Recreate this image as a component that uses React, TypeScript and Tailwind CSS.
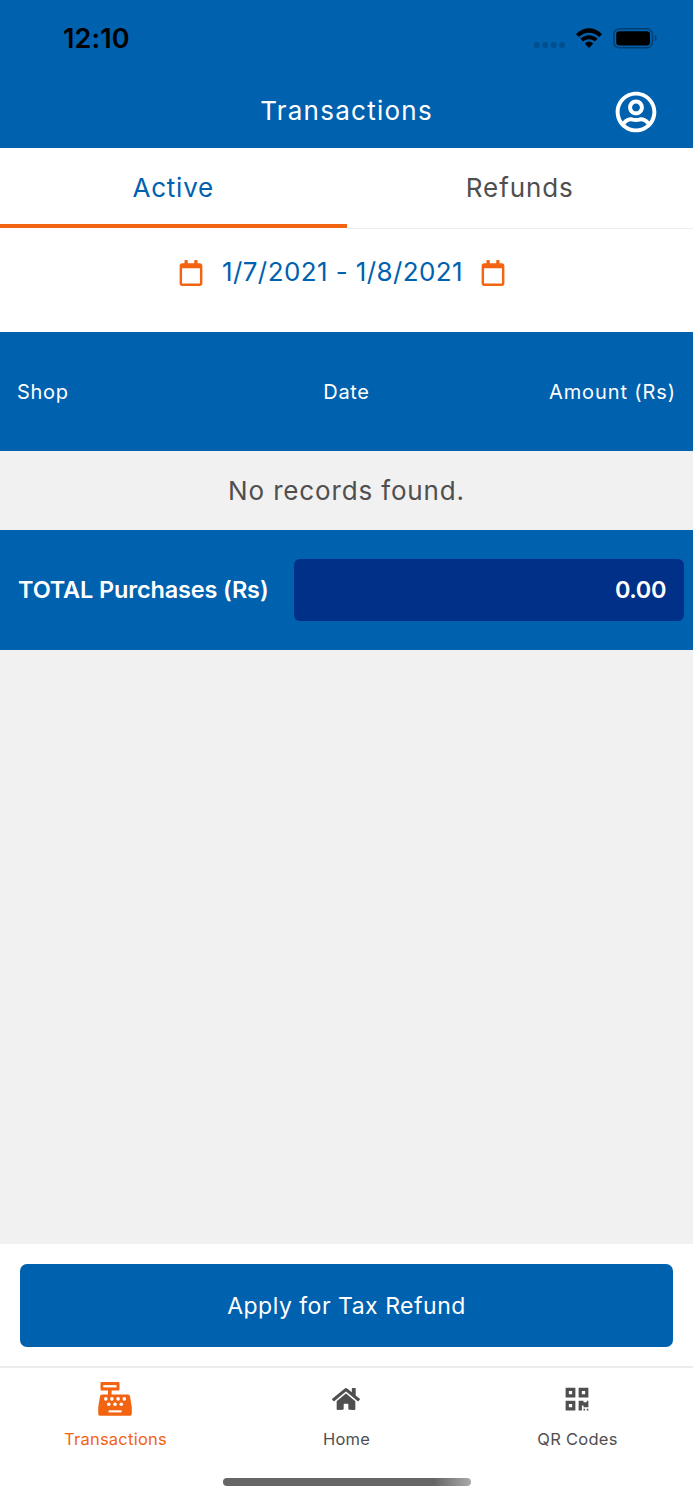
import { FaHome, FaQrcode, FaRegCalendar, FaRegUserCircle } from "react-icons/fa";

function StatusBar() {
  return (
    <div className="flex h-[76px] items-center justify-between pl-[63px] pr-[35px]">
      <span className="text-[27px] font-semibold leading-none tracking-[0.1px] text-black">
        12:10
      </span>
      <div className="flex items-center">
        <svg width="32" height="6" viewBox="0 0 32 6" className="mt-[14px]" fill="#004f8f">
          <rect x="0" y="0" width="5.6" height="6" rx="2" />
          <rect x="8.4" y="0" width="5.6" height="6" rx="2" />
          <rect x="16.9" y="0" width="5.6" height="6" rx="2" />
          <rect x="25.3" y="0" width="5.6" height="6" rx="2" />
        </svg>
        <svg width="28" height="21" viewBox="0 0 28 21" className="ml-[9px]" fill="#000">
          <path d="M1 6.200C8.500-1.700 19.500-1.700 27 6.200L24.200 9C18.300 3.200 9.700 3.200 3.800 9Z" />
          <path d="M5.400 10.800C10.300 5.900 17.700 5.900 22.600 10.800L19.800 13.500C16.500 10.400 11.500 10.400 8.200 13.500Z" />
          <path d="M9.700 15.400C12.200 13.300 15.800 13.300 18.300 15.400L14 20Z" />
        </svg>
        <svg width="45" height="21" viewBox="0 0 45 21" className="ml-[10px]">
          <rect x="0.8" y="0.8" width="38.6" height="19" rx="5.5" fill="none" stroke="#003e70" strokeWidth="1.5" />
          <rect x="3.2" y="3.2" width="33.8" height="14.2" rx="3.2" fill="#000" />
          <path d="M41.800 7v6.600c2.400-1.200 2.400-5.400 0-6.600z" fill="#003e70" />
        </svg>
      </div>
    </div>
  );
}

function CashRegisterIcon() {
  return (
    <svg width="34" height="34" viewBox="0 0 34 34">
      <path
        fill="#f26411"
        d="M3.500 0h17a1 1 0 0 1 1 1v6.500a1 1 0 0 1-1 1h-6.900v4H30a2 2 0 0 1 2 1.700l1.800 11V32a1.800 1.800 0 0 1-1.800 1.800H2A1.800 1.800 0 0 1 .2 32v-6.800l1.800-11a2 2 0 0 1 2-1.700h6V8.500H3.500a1 1 0 0 1-1-1V1a1 1 0 0 1 1-1z"
      />
      <g fill="#fff">
        <rect x="5.300" y="3.100" width="13.200" height="2.300" />
        <rect x="10.600" y="28.300" width="13" height="2.100" />
        <circle cx="7.800" cy="16.900" r="1.800" />
        <circle cx="13.900" cy="16.900" r="1.800" />
        <circle cx="20.100" cy="16.900" r="1.800" />
        <circle cx="26.300" cy="16.900" r="1.800" />
        <circle cx="10.800" cy="22.300" r="1.800" />
        <circle cx="17" cy="22.300" r="1.800" />
        <circle cx="23.300" cy="22.300" r="1.800" />
      </g>
    </svg>
  );
}

const TABS = [
  {
    label: "Transactions",
    icon: <CashRegisterIcon />,
    className: "text-[#f26411]",
  },
  {
    label: "Home",
    icon: <FaHome size={28} />,
    className: "text-[#4f4f4f]",
  },
  {
    label: "QR Codes",
    icon: <FaQrcode size={26} />,
    className: "text-[#4f4f4f]",
  },
];

export default function App() {
  return (
    <div className="flex h-[1500px] w-[693px] flex-col bg-[#f1f1f1] font-['Inter',sans-serif]">
      <header className="h-[148px] shrink-0 bg-[#0061af] text-white">
        <StatusBar />
        <div className="grid h-[71px] grid-cols-[1fr_auto_1fr] items-center">
          <h1 className="col-start-2 pb-[2px] text-[26px] tracking-[1.25px]">Transactions</h1>
          <FaRegUserCircle size={42} className="mr-[36px] justify-self-end" />
        </div>
      </header>

      {/* Active / Refunds */}
      <div className="grid h-[81px] shrink-0 grid-cols-2 grid-rows-[81px] bg-white text-center text-[26px] leading-[80px]">
        <div className="flex h-[80px] flex-col border-b-[4px] border-[#f26411] tracking-[0.8px] text-[#0061af]">
          <span className="h-[76px]">Active</span>
        </div>
        <div className="flex h-[81px] flex-col border-b border-[#ececec] tracking-[0.9px] text-[#4f4f4f]">
          <span className="h-[80px]">Refunds</span>
        </div>
      </div>

      <div className="flex h-[103px] shrink-0 justify-center bg-white pr-[9px] pt-[23px] text-[#0061af]">
        <div className="flex h-[40px] items-center">
          <FaRegCalendar size={26} className="mt-[2px] mr-[18px] text-[#f26411]" />
          <span className="pb-px text-[26px] tracking-[0.4px]">1/7/2021 - 1/8/2021</span>
          <FaRegCalendar size={26} className="mt-[2px] ml-[17px] text-[#f26411]" />
        </div>
      </div>

      <div className="grid h-[119px] shrink-0 grid-cols-3 items-center bg-[#0061af] px-[17px] text-[20px] tracking-[0.7px] text-white">
        <span>Shop</span>
        <span className="text-center">Date</span>
        <span className="text-right tracking-[0.9px]">Amount (Rs)</span>
      </div>

      <div className="h-[79px] shrink-0 text-center text-[26px] leading-[80px] tracking-[0.85px] text-[#4f4f4f]">
        No records found.
      </div>

      <div className="flex h-[120px] shrink-0 items-center justify-between bg-[#0061af] pl-[18px] pr-[9px] text-[23.500px] font-semibold tracking-[-0.15px] text-white">
        <span>TOTAL Purchases (Rs)</span>
        <div className="flex h-[62px] w-[390px] items-center justify-end rounded-[6px] bg-[#003087] pr-[18px] tracking-[-0.4px]">
          0.00
        </div>
      </div>

      <div className="mt-auto h-[124px] shrink-0 border-b-2 border-[#ececec] bg-white px-[20px] pt-[20px]">
        <button className="h-[83px] w-full rounded-[7px] bg-[#0061af] pt-[2px] text-[23px] tracking-[0.5px] text-white">
          Apply for Tax Refund
        </button>
      </div>

      <nav className="flex h-[132px] shrink-0 flex-col bg-white">
        <div className="grid grid-cols-3">
          {TABS.map((tab) => (
            <div key={tab.label} className={`flex flex-col items-center ${tab.className}`}>
              <div className="flex h-[61px] items-center pr-[2px]">{tab.icon}</div>
              <span className="text-[16.500px] leading-[20px] tracking-[0.25px]">{tab.label}</span>
            </div>
          ))}
        </div>
        <div className="mx-auto mt-[29px] h-[8px] w-[248px] rounded-full bg-linear-to-r from-[#666] from-85% to-[#aaa]" />
      </nav>
    </div>
  );
}
